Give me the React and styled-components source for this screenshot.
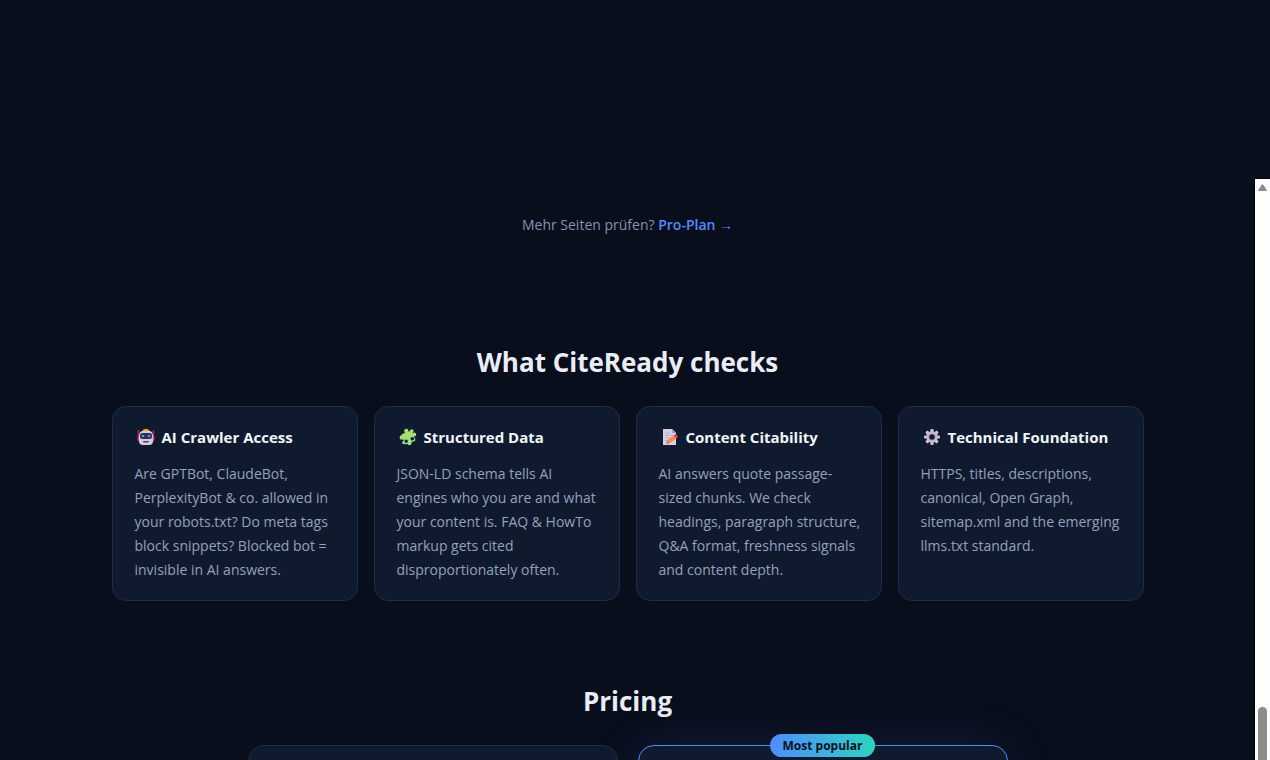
import React from "react";
import styled, { createGlobalStyle } from "styled-components";

const GlobalStyle = createGlobalStyle`
  *, *::before, *::after { box-sizing: border-box; }
  body {
    margin: 0;
    background: #080e1b;
    color: #e8edf7;
    font-family: "Segoe UI", "Open Sans", "Noto Sans", sans-serif;
    font-size: 14px;
  }
  h2, h3, p { margin: 0; }
`;

const Shell = styled.div`
  display: flex;
  height: 100vh;
  overflow: hidden;
`;

const Page = styled.main`
  flex: 1;
  min-width: 0;
  padding-top: 213px;
`;

const ScrollRail = styled.div`
  flex: none;
  width: 15px;
  margin-top: 179px;
  padding-top: 5px;
  background: #fdfdfd;
  box-shadow: 0 0 0 1px #03050b;
  display: flex;
  flex-direction: column;
  align-items: center;
  justify-content: space-between;
`;

const Thumb = styled.div`
  width: 9px;
  height: 53px;
  border-radius: 5px 5px 0 0;
  background: #8b8b8b;
`;

const Upsell = styled.p`
  text-align: center;
  font-size: 14px;
  line-height: 24px;
  color: #8493b0;
`;

const UpsellLink = styled.a`
  color: #4f8cff;
  font-weight: 600;
  text-decoration: none;
`;

const Section = styled.section`
  max-width: ${(p) => p.$width};
  margin: 0 auto;
  padding: ${(p) => p.$top} 24px 0;
`;

const SectionTitle = styled.h2`
  text-align: center;
  font-size: 26px;
  line-height: 40px;
  font-weight: 700;
  margin-bottom: 24px;
`;

const CheckGrid = styled.div`
  display: grid;
  grid-template-columns: repeat(auto-fit, minmax(220px, 1fr));
  gap: 16px;
`;

const Card = styled.article`
  background: #101a2e;
  border: 1px solid #1f2b48;
  border-radius: 14px;
  padding: 18px 22px;
`;

const CardTitle = styled.h3`
  display: flex;
  align-items: center;
  gap: 5px;
  font-size: 15px;
  line-height: 24px;
  font-weight: 700;
  color: #f1f5fc;
  margin-bottom: 13px;
  white-space: nowrap;

  svg {
    flex: none;
    width: 22px;
    height: 18px;
  }
`;

const CardText = styled.p`
  line-height: 24px;
  color: #93a1bd;
  margin-right: -12px;
  white-space: pre-line;
`;

const PlanGrid = styled.div`
  display: grid;
  grid-template-columns: 1fr 1fr;
  gap: 20px;
`;

const Plan = styled.article`
  position: relative;
  min-height: 320px;
  background: #101a2e;
  border: 1px solid ${(p) => (p.$featured ? "#4f8cff" : "#1f2b48")};
  border-radius: 16px;
  box-shadow: ${(p) => (p.$featured ? "0 0 50px rgba(79, 100, 220, 0.16)" : "none")};
`;

const Badge = styled.span`
  position: absolute;
  top: -12px;
  left: 50%;
  transform: translateX(-50%);
  padding: 0 13px;
  border-radius: 12px;
  background: linear-gradient(90deg, #4f8cff, #2dd4bf);
  color: #06101f;
  font-size: 12px;
  line-height: 23px;
  font-weight: 700;
  white-space: nowrap;
`;

const RobotIcon = () => (
  <svg viewBox="0 0 22 18" aria-hidden="true">
    <path d="M3.500 2v8M18.500 2v8" stroke="#b52a64" strokeWidth="1.300" />
    <path d="M7 3.500Q8 .8 11 .8t4 2.700z" fill="#f5a524" />
    <rect x="2.500" y="8" width="2.500" height="5" rx="1" fill="#d5386d" />
    <rect x="17" y="8" width="2.500" height="5" rx="1" fill="#d5386d" />
    <path d="M7 3h8q3 1 3 5v5q0 4-4 4H8q-4 0-4-4V8q0-4 3-5z" fill="#dcc7e5" />
    <rect x="5" y="5" width="12" height="6" rx="2.500" fill="#263353" />
    <circle cx="8" cy="8" r="1.300" fill="#3f9cf3" />
    <circle cx="14" cy="8" r="1.300" fill="#3f9cf3" />
    <rect x="8" y="13" width="6" height="1.600" rx=".8" fill="#554064" />
  </svg>
);

const PuzzleIcon = () => (
  <svg viewBox="0 0 22 18" aria-hidden="true">
    <defs>
      <linearGradient id="puzzle" x1="0" y1="1" x2="1" y2="0">
        <stop offset="0" stopColor="#72e69a" />
        <stop offset="1" stopColor="#cddb55" />
      </linearGradient>
      <mask id="puzzle-notches">
        <rect width="22" height="18" fill="#fff" />
        <circle cx="15.300" cy="10.800" r="1.800" fill="#000" />
        <circle cx="9.200" cy="13.200" r="1.600" fill="#000" />
      </mask>
    </defs>
    <g fill="url(#puzzle)" mask="url(#puzzle-notches)">
      <rect x="6" y="4" width="11" height="11" rx="1" transform="rotate(-22 11.500 9.500)" />
      <circle cx="9.300" cy="3" r="2.200" />
      <circle cx="17.200" cy="6.500" r="2" />
      <circle cx="14.800" cy="3" r="1.800" />
      <circle cx="4.800" cy="9.500" r="2.200" />
      <circle cx="7" cy="14.500" r="1.800" />
      <circle cx="12.500" cy="15.300" r="2" />
    </g>
  </svg>
);

const MemoIcon = () => (
  <svg viewBox="0 0 22 18" aria-hidden="true">
    <path d="M4 1h9l4 4v12H4z" fill="#d9cfe2" />
    <path d="M13 1v4h4z" fill="#aa9ab9" />
    <path d="M6 5h5M6 7.500h8M6 10h6M6 12.500h3" stroke="#bbb0c8" />
    <path d="M7.500 15.500l1-3.500 6-4.500 2.800 3.200-6.300 4.400z" fill="#ff8a4c" />
    <path d="M14.500 7.500l1.500-1.200q1-.5 2 .8t.7 2l-1.400 1.600z" fill="#e63c5b" />
    <path d="M7.500 15.500l.6-2 1.500 1.700z" fill="#695174" />
  </svg>
);

const GearIcon = () => (
  <svg viewBox="0 0 22 18" aria-hidden="true">
    {[0, 45, 90, 135].map((angle) => (
      <rect
        key={angle}
        x="9.400"
        y="1"
        width="3.200"
        height="16"
        rx="1"
        fill="#cdc3da"
        transform={`rotate(${angle} 11 9)`}
      />
    ))}
    <circle cx="11" cy="9" r="5.800" fill="#c5bad3" />
    <circle cx="11" cy="9" r="3.300" fill="#85788f" />
    <circle cx="11" cy="9" r="2.500" fill="#101a2e" />
  </svg>
);

const checks = [
  {
    icon: RobotIcon,
    title: "AI Crawler Access",
    text: "Are GPTBot, ClaudeBot,\nPerplexityBot & co. allowed in\nyour robots.txt? Do meta tags\nblock snippets? Blocked bot =\ninvisible in AI answers.",
  },
  {
    icon: PuzzleIcon,
    title: "Structured Data",
    text: "JSON-LD schema tells AI\nengines who you are and what\nyour content is. FAQ & HowTo\nmarkup gets cited\ndisproportionately often.",
  },
  {
    icon: MemoIcon,
    title: "Content Citability",
    text: "AI answers quote passage-\nsized chunks. We check\nheadings, paragraph structure,\nQ&A format, freshness signals\nand content depth.",
  },
  {
    icon: GearIcon,
    title: "Technical Foundation",
    text: "HTTPS, titles, descriptions,\ncanonical, Open Graph,\nsitemap.xml and the emerging\nllms.txt standard.",
  },
];

export default function App() {
  return (
    <>
      <GlobalStyle />
      <Shell>
        <Page>
          <Upsell>
            Mehr Seiten prüfen? <UpsellLink href="#pricing">Pro-Plan →</UpsellLink>
          </Upsell>
          <Section $width="1080px" $top="105px">
            <SectionTitle>What CiteReady checks</SectionTitle>
            <CheckGrid>
              {checks.map(({ icon: Icon, title, text }) => (
                <Card key={title}>
                  <CardTitle>
                    <Icon />
                    {title}
                  </CardTitle>
                  <CardText>{text}</CardText>
                </Card>
              ))}
            </CheckGrid>
          </Section>
          <Section id="pricing" $width="808px" $top="80px">
            <SectionTitle>Pricing</SectionTitle>
            <PlanGrid>
              <Plan />
              <Plan $featured>
                <Badge>Most popular</Badge>
              </Plan>
            </PlanGrid>
          </Section>
        </Page>
        <ScrollRail aria-hidden="true">
          <svg width="9" height="7" viewBox="0 0 9 7">
            <path d="M4.500 0.500L8.500 6.500H0.500z" fill="#8b8b8b" stroke="#8b8b8b" strokeLinejoin="round" />
          </svg>
          <Thumb />
        </ScrollRail>
      </Shell>
    </>
  );
}
